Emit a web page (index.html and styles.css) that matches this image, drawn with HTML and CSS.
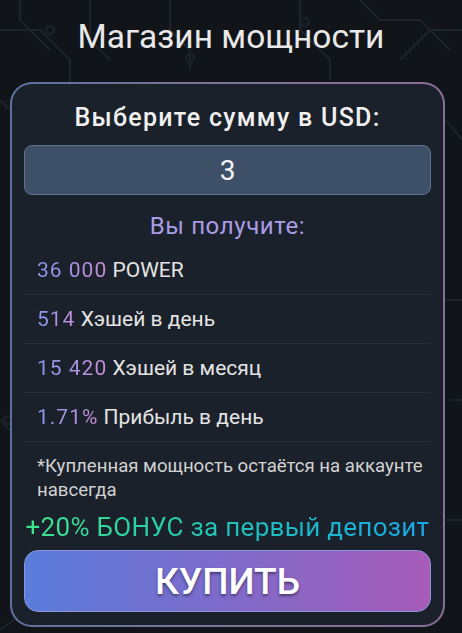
FILE: index.html
```html
<!DOCTYPE html>
<html lang="ru">
<head>
<meta charset="UTF-8">
<meta name="viewport" content="width=device-width, initial-scale=1.0">
<title>Магазин мощности</title>
<link rel="stylesheet" href="styles.css">
</head>
<body>
<svg class="circuit" viewBox="0 0 462 633" preserveAspectRatio="none">
  <g fill="none" stroke="#1d242b" stroke-width="2">
    <path d="M0 30 L40 30 L70 60 L70 120"/>
    <path d="M20 0 L20 20 L50 50"/>
    <circle cx="50" cy="30" r="4"/>
    <path d="M90 0 L90 40 L110 60"/>
    <path d="M190 70 L190 50 L170 30 L170 0"/>
    <circle cx="190" cy="58" r="4"/>
    <path d="M300 0 L300 30 L330 60 L330 80"/>
    <path d="M360 0 L380 20 L420 20 L450 50"/>
    <circle cx="305" cy="22" r="4"/>
    <path d="M400 60 L430 30 L462 30"/>
    <path d="M0 100 L20 120 L20 180"/>
    <path d="M446 120 L462 140"/>
    <path d="M446 300 L462 300"/>
    <path d="M0 420 L10 430"/>
    <circle cx="8" cy="420" r="4"/>
    <path d="M450 400 L462 400"/>
    <path d="M0 630 L40 600"/>
    <path d="M446 520 L462 520"/>
  </g>
</svg>

<h1 class="title">Магазин мощности</h1>

<div class="card">
  <h2 class="label">Выберите сумму в USD:</h2>
  <input class="amount" type="text" value="3">

  <div class="receive">Вы получите:</div>
  <div class="row"><span class="num">36 000</span> POWER</div>
  <div class="row"><span class="num">514</span> Хэшей в день</div>
  <div class="row"><span class="num">15 420</span> Хэшей в месяц</div>
  <div class="row"><span class="num">1.71%</span> Прибыль в день</div>

  <p class="note">*Купленная мощность остаётся на аккаунте навсегда</p>
  <div class="bonus">+20% БОНУС за первый депозит</div>
  <button class="buy-btn">КУПИТЬ</button>
</div>
</body>
</html>
```

FILE: styles.css
```css
body {
  margin: 0;
  background-color: #111519;
  font-family: Roboto, "Noto Sans", sans-serif;
  color: #e6e6e6;
  position: relative;
  min-height: 633px;
}

.circuit {
  position: absolute;
  top: 0;
  left: 0;
  width: 462px;
  height: 633px;
  z-index: 0;
}

.title {
  position: relative;
  margin: 0;
  padding-top: 20px;
  font-size: 33.5px;
  font-weight: 400;
  line-height: 34px;
  text-align: center;
  color: #e8e8e8;
}

.card {
  position: relative;
  margin: 28px 17px 0 10px;
  padding: 20px 12px 13px;
  border: 2px solid transparent;
  border-radius: 22px;
  background:
    linear-gradient(#1b212a, #1b212a) padding-box,
    linear-gradient(90deg, #5d71a0, #7d7596, #8d6e98) border-box;
}

.label {
  margin: 0;
  font-size: 25px;
  font-weight: 500;
  letter-spacing: 1.3px;
  line-height: 28px;
  text-align: center;
  color: #f0f0f0;
}

.amount {
  display: block;
  box-sizing: border-box;
  width: 100%;
  height: 50px;
  margin-top: 13px;
  border: 1px solid #5e7290;
  border-radius: 8px;
  background-color: #3e5068;
  color: #f4f4f4;
  font-family: inherit;
  font-size: 28px;
  text-align: center;
}

.receive {
  margin-top: 18px;
  margin-bottom: 7px;
  font-size: 24px;
  letter-spacing: 0.6px;
  line-height: 26px;
  text-align: center;
  color: #a99ce4;
}

.row {
  height: 48px;
  line-height: 48px;
  padding-left: 13px;
  border-bottom: 1px solid #262f39;
  font-size: 21px;
  color: #e4e4e4;
}

.num {
  letter-spacing: 1px;
  background: linear-gradient(90deg, #8599ee, #c98ed6);
  -webkit-background-clip: text;
  background-clip: text;
  color: transparent;
}

.note {
  margin: 12px 0 0;
  padding-left: 13px;
  font-size: 18.6px;
  line-height: 24px;
  color: #d2d2d2;
}

.bonus {
  margin-top: 10px;
  font-size: 26px;
  letter-spacing: 0.3px;
  line-height: 30px;
  text-align: center;
  white-space: nowrap;
  background: linear-gradient(90deg, #3fe58c, #1fc2b8 50%, #1aa8e6);
  -webkit-background-clip: text;
  background-clip: text;
  color: transparent;
}

.buy-btn {
  display: block;
  width: 100%;
  height: 62px;
  margin-top: 8px;
  border: 1px solid #8c95d8;
  border-radius: 14px;
  background: linear-gradient(90deg, #5a7ddb, #7b6ccc 45%, #a75cb8);
  color: #ffffff;
  font-family: inherit;
  font-size: 37px;
  font-weight: 500;
  text-shadow: 0 2px 3px rgba(0, 0, 0, 0.45);
  cursor: pointer;
}
```
